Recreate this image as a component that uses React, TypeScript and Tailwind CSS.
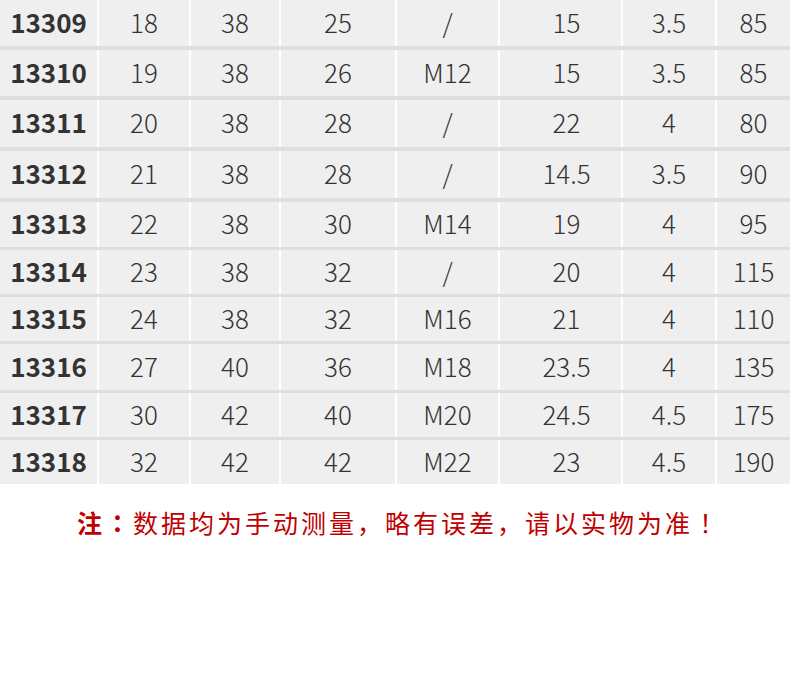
const rows: [string, string, string, string, string, string, string, string][] = [
  ["13309", "18", "38", "25", "/", "15", "3.5", "85"],
  ["13310", "19", "38", "26", "M12", "15", "3.5", "85"],
  ["13311", "20", "38", "28", "/", "22", "4", "80"],
  ["13312", "21", "38", "28", "/", "14.5", "3.5", "90"],
  ["13313", "22", "38", "30", "M14", "19", "4", "95"],
  ["13314", "23", "38", "32", "/", "20", "4", "115"],
  ["13315", "24", "38", "32", "M16", "21", "4", "110"],
  ["13316", "27", "40", "36", "M18", "23.5", "4", "135"],
  ["13317", "30", "42", "40", "M20", "24.5", "4.5", "175"],
  ["13318", "32", "42", "42", "M22", "23", "4.5", "190"]
]

// row height (content) + separator below, measured from the reference
const rowHeights = ["h-[46px]", "h-[46px]", "h-[47px]", "h-[47px]", "h-[45px]", "h-[44px]", "h-[44px]", "h-[46px]", "h-[44px]", "h-[44px]"]
const sepHeights = ["h-[4px]", "h-[4px]", "h-[4px]", "h-[4px]", "h-[3px]", "h-[3px]", "h-[3px]", "h-[3px]", "h-[3px]"]

const colClasses = [
  "w-[97px] font-bold text-[25.5px] text-[#222]",
  "w-[90px] font-light",
  "w-[88px] font-light",
  "w-[114px] font-light",
  "w-[101px] font-light",
  "w-[121px] pl-3 font-light",
  "w-[92px] font-light",
  "flex-1 font-light"
]

export default function App() {
  return (
    <div className="h-[679px] w-[790px] bg-white font-['Noto_Sans_CJK_SC','Noto_Sans',sans-serif]">
      <div className="flex flex-col bg-[#dedede]">
        {rows.map((row, i) => (
          <div key={row[0]} className="flex flex-col">
            <div className={`flex gap-[2px] bg-white ${rowHeights[i]}`}>
              {row.map((cell, j) => (
                <div
                  key={j}
                  className={`flex items-center justify-center bg-[#efefef] pb-[3px] text-[26px] leading-none text-[#333] ${colClasses[j]}`}
                >
                  {cell}
                </div>
              ))}
            </div>
            {i < rows.length - 1 && <div className={sepHeights[i]} />}
          </div>
        ))}
      </div>
      <p className="mt-[26px] pl-[8px] text-center text-[25px] leading-none tracking-[3px] text-[#c00000]">
        <span className="font-bold">注</span>
        <span className="font-['Noto_Sans_CJK_TC',sans-serif] font-bold">：</span>
        数据均为手动测量，略有误差，请以实物为准
        <span className="font-['Noto_Sans_CJK_TC',sans-serif]">！</span>
      </p>
    </div>
  )
}
